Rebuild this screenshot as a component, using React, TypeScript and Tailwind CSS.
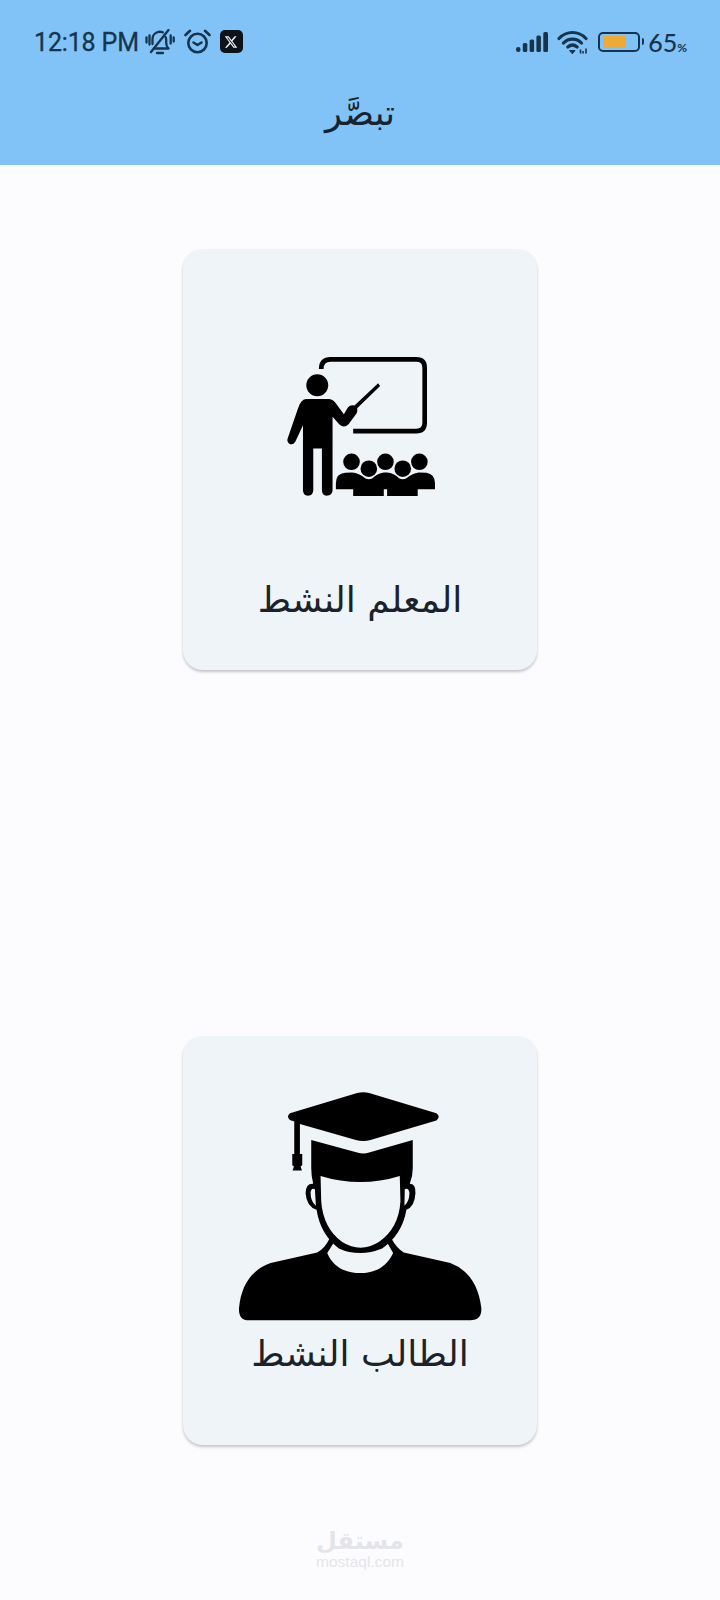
const ink = "#17344d";

function BellOff() {
  return (
    <svg width="30" height="26" viewBox="0 0 30 26" fill="none" stroke={ink} strokeWidth="2.300" strokeLinecap="round" strokeLinejoin="round">
      <path d="M9.500 19.500h14c-1.500-1.500-2.300-3-2.300-5.500v-3c0-1-.2-2-.7-3" />
      <path d="M7.500 15v-5c0-3.800 3-6.800 7-7.300 1.200 0 2.300.2 3.300.7" />
      <path d="M12 24h6" />
      <path d="M6 23 23.500 1" />
      <path d="M1.500 8.500v5M4.500 6.500v9M25.700 6.500v8M28.700 8.500v4" />
    </svg>
  );
}

function Alarm() {
  return (
    <svg width="27" height="25" viewBox="0 0 27 25" fill="none" stroke={ink} strokeWidth="2.600" strokeLinecap="round" strokeLinejoin="round">
      <circle cx="13.500" cy="14" r="9.200" />
      <path d="M9.500 13.500l4 2.500 4-2.500" />
      <path d="M1.500 6 6 1.800M25.500 6 21 1.800" />
    </svg>
  );
}

function XBadge() {
  return (
    <div className="flex h-[23px] w-[23px] items-center justify-center rounded-[5px] bg-[#0d1319]">
      <svg width="14" height="14" viewBox="0 0 24 24" fill="#f4f4f4">
        <path d="M18.244 2.250h3.308l-7.227 8.260 8.502 11.240H16.170l-5.214-6.817L4.990 21.750H1.680l7.730-8.835L1.254 2.250H8.080l4.713 6.231zm-1.161 17.520h1.833L7.084 4.126H5.117z" />
      </svg>
    </div>
  );
}

function Signal() {
  return (
    <svg width="32" height="20" viewBox="0 0 32 20" fill={ink}>
      <rect x="0" y="15" width="4.500" height="5" rx="2.200" />
      <rect x="6.800" y="11" width="4.500" height="9" rx="1.500" />
      <rect x="13.600" y="7.500" width="4.500" height="12.500" rx="1.500" />
      <rect x="20.400" y="3.500" width="4.500" height="16.500" rx="1.500" />
      <rect x="27.300" y="0" width="4.700" height="20" rx="1.500" />
    </svg>
  );
}

function Wifi() {
  return (
    <svg width="31" height="24" viewBox="0 0 31 24" fill="none" stroke={ink} strokeWidth="3.200" strokeLinecap="round">
      <path d="M2 8.500C9.500 .5 21.500 .5 29 8.500" />
      <path d="M6.500 13C11.500 7.800 19.500 7.800 24.500 13" />
      <path d="M10.800 17c3-2.600 6.400-2.600 9.400 0" />
      <path d="M13 20.500h5l-2.500 3z" fill={ink} strokeWidth="1" />
      <path d="M23.500 19.500v4M26 21v2.500M29 18.500v5" strokeWidth="1.600" strokeLinecap="butt" />
    </svg>
  );
}

function Battery() {
  return (
    <div className="flex items-center gap-[2px]">
      <div className="flex h-[20px] w-[42px] items-center rounded-[5px] border-2 border-[#17344d] px-[3px]">
        <div className="h-[12px] w-[23px] rounded-[1px] bg-[#eeaa35]" />
      </div>
      <div className="h-[7px] w-[2px] rounded-r-sm bg-[#17344d]" />
    </div>
  );
}

function Teacher() {
  return (
    <svg width="153" height="142" viewBox="340 75 460 425" fill="#000">
      <path d="M452 116Q452 87 480 87H738Q763 87 763 112V278Q763 303 738 303H548" fill="none" stroke="#000" strokeWidth="14" />
      <circle cx="440" cy="165" r="33" />
      <path d="M408 206H474Q486 206 494 217L520 252L532 232Q540 222 552 226L623 159L629 167L560 234Q562 244 558 250L534 282Q520 296 506 282L486 260V480Q486 497 468 497Q454 497 454 480V355H428V480Q428 497 412 497Q397 497 397 480V285L374 335Q366 347 355 340Q347 333 352 322L382 235Q390 206 408 206Z" />
      <circle cx="543" cy="395" r="25" />
      <circle cx="645" cy="395" r="25" />
      <circle cx="747" cy="395" r="25" />
      <circle cx="595" cy="416" r="25" />
      <circle cx="697" cy="416" r="25" />
      <path d="M496 478V460Q496 430 524 428L545 427Q565 428 585 445Q595 450 605 445Q620 430 640 427H650Q670 428 687 445Q697 450 707 445Q725 430 745 427L768 428Q794 432 794 460V478H742V498H650V478H640V498H548V478Z" />
    </svg>
  );
}

function Student() {
  return (
    <svg width="247" height="233" viewBox="200 90 740 700" fill="#000">
      <path d="M358 160L560 99Q578 94 596 99L798 160Q812 170 798 182L600 240Q578 246 556 240L388 192V282H395V316L390 320L394 332H366L370 320L365 316V282H371V185L358 180Q346 170 358 160Z" />
      <path d="M422 240L560 278Q578 284 596 278L727 240V325Q727 350 718 372Q736 372 735 400Q733 440 708 450Q695 525 635 566Q600 580 570 580Q535 580 505 566Q450 525 438 450Q408 440 405 400Q406 370 428 372Q422 350 422 325Z" />
      <path d="M450 348Q570 385 688 348L690 425Q685 505 625 547Q598 564 570 564Q542 564 515 547Q458 505 452 425Z" fill="#eff4f8" />
      <path d="M420 398Q422 382 433 388L436 438Q420 425 420 398ZM703 388Q714 382 717 398Q717 425 702 438Z" fill="#eff4f8" />
      <path d="M205 745Q215 640 300 610L440 578Q462 568 478 535L490 548L470 580Q495 640 570 640Q640 640 668 580L650 548L662 535Q680 568 700 578L840 610Q920 640 933 745Q935 782 900 782H235Q203 782 205 745Z" />
    </svg>
  );
}

export default function App() {
  return (
    <div className="relative flex h-[1600px] w-[720px] flex-col bg-[#fcfcff] font-['Roboto',sans-serif]">
      <header className="flex h-[165px] flex-col bg-[#81c3f7] pt-[29px]">
        <div className="flex h-[25px] items-center justify-between pl-[34px] pr-[33px]">
          <div className="flex items-center">
            <span className="pt-[2px] text-[25px] font-normal leading-none tracking-[-0.150px] text-[#17344d] [-webkit-text-stroke:0.300px_#17344d]">12:18 PM</span>
            <div className="ml-[6px] flex items-center gap-[9px]">
              <BellOff />
              <Alarm />
              <XBadge />
            </div>
          </div>
          <div className="flex items-center">
            <Signal />
            <div className="ml-[9px]"><Wifi /></div>
            <div className="ml-[10px]"><Battery /></div>
            <span className="ml-[4px] pt-[2px] font-['Lato',sans-serif] text-[25px] font-medium leading-none text-[#17344d]">65<span className="text-[12px] font-bold">%</span></span>
          </div>
        </div>
        <h1 dir="rtl" className="mt-[34px] text-center font-['DejaVu_Sans',sans-serif] text-[35px] font-normal leading-[50px] text-[#17232e]">تبصَّر</h1>
      </header>
      <main className="flex flex-col items-center pt-[84px]">
        <button className="flex h-[421px] w-[354px] flex-col items-center rounded-[20px] bg-[#eff4f8] pt-[106px] shadow-[0_2px_3px_rgba(0,0,0,0.22)]">
          <Teacher />
          <span dir="rtl" className="mt-[78px] font-['DejaVu_Sans',sans-serif] text-[36px] leading-[50px] text-[#1b222a]">المعلم النشط</span>
        </button>
        <button className="mt-[366px] flex h-[409px] w-[354px] flex-col items-center rounded-[20px] bg-[#eff4f8] pt-[54px] shadow-[0_2px_3px_rgba(0,0,0,0.22)]">
          <Student />
          <span dir="rtl" className="mt-[6px] font-['DejaVu_Sans',sans-serif] text-[36px] leading-[50px] text-[#1b222a]">الطالب النشط</span>
        </button>
      </main>
      <div className="absolute left-[315px] top-[1528px] flex w-[90px] flex-col items-center text-[#e4e5e8]">
        <span dir="rtl" className="font-['DejaVu_Sans',sans-serif] text-[24px] font-bold leading-[26px]">مستقل</span>
        <span className="font-['Liberation_Sans',sans-serif] text-[15.500px] leading-[15px]">mostaql.com</span>
      </div>
    </div>
  );
}
